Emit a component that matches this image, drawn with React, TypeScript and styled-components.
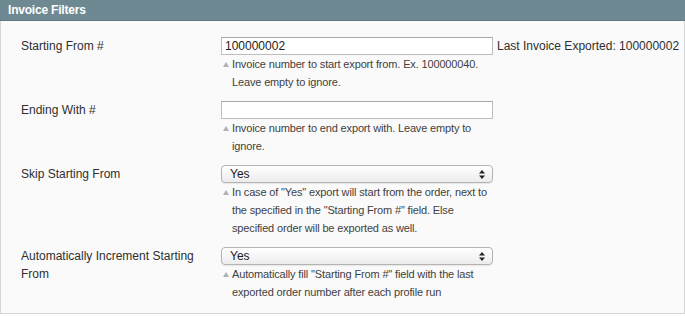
import React from "react";
import styled, { createGlobalStyle } from "styled-components";

const Global = createGlobalStyle`
  html, body { margin: 0; padding: 0; background: #ffffff; }
  body { font-family: "Liberation Sans", Arial, sans-serif; }
`;

const Panel = styled.section`
  width: 685px;
  box-sizing: border-box;
`;

const Header = styled.div`
  height: 21px;
  background: #6f8992;
  border-bottom: 1px solid #5f7780;
  box-sizing: border-box;
  padding: 0 8px;
  display: flex;
  align-items: center;
  color: #ffffff;
  font-weight: bold;
  font-size: 12px;
  letter-spacing: -0.2px;
`;

const Body = styled.div`
  background: #fafafa;
  border: 1px solid #d6d6d6;
  border-top: none;
  padding: 16px 0 13px 20px;
  display: flex;
  flex-direction: column;
  gap: 10px;
  height: 293px;
  box-sizing: border-box;
`;

const Row = styled.div`
  display: flex;
  align-items: flex-start;
`;

const Label = styled.div`
  width: 180px;
  margin-right: 20px;
  font-size: 12px;
  line-height: 18px;
  color: #2f2f2f;
`;

const Field = styled.div`
  width: 272px;
  display: flex;
  flex-direction: column;
`;

const TextInput = styled.input`
  width: 272px;
  height: 18px;
  box-sizing: border-box;
  border: 1px solid #bdbdbd;
  border-top-color: #a8a8a8;
  background: #ffffff;
  font-family: "Liberation Sans", Arial, sans-serif;
  font-size: 12px;
  color: #222;
  padding: 0 3px;
  margin: 0;
  outline: none;
`;

const SelectBox = styled.div`
  position: relative;
  width: 272px;
  height: 18px;
  box-sizing: border-box;
  border: 1px solid #b4b4b4;
  border-radius: 4px;
  background: linear-gradient(#ffffff, #ececec);
  box-shadow: 0 1px 1px rgba(0, 0, 0, 0.08);
  display: flex;
  align-items: center;
  padding: 0 8px;
  font-size: 12px;
  color: #1a1a1a;
`;

const Arrows = styled.svg`
  position: absolute;
  right: 7px;
  top: 4px;
`;

const Note = styled.div`
  position: relative;
  padding-left: 11px;
  font-size: 11px;
  line-height: 18px;
  letter-spacing: -0.15px;
  color: #3f3f3f;
`;

const Tri = styled.span`
  position: absolute;
  left: 2px;
  top: 7px;
  width: 0;
  height: 0;
  border-left: 3px solid transparent;
  border-right: 3px solid transparent;
  border-bottom: 5px solid #a9b3b8;
`;

const Side = styled.div`
  margin-left: 4px;
  font-size: 12px;
  line-height: 18px;
  color: #2f2f2f;
  white-space: nowrap;
`;

const Select = ({ value }: { value: string }) => (
  <SelectBox>
    {value}
    <Arrows width="6" height="9" viewBox="0 0 6 9">
      <path d="M3 0 L6 3.5 L0 3.5 Z" fill="#222" />
      <path d="M3 9 L6 5.5 L0 5.5 Z" fill="#222" />
    </Arrows>
  </SelectBox>
);

const Hint = ({ children }: { children: React.ReactNode }) => (
  <Note>
    <Tri />
    {children}
  </Note>
);

export default function App() {
  return (
    <>
      <Global />
      <Panel>
        <Header>Invoice Filters</Header>
        <Body>
          <Row>
            <Label>Starting From #</Label>
            <Field>
              <TextInput defaultValue="100000002" />
              <Hint>Invoice number to start export from. Ex. 100000040. Leave empty to ignore.</Hint>
            </Field>
            <Side>Last Invoice Exported: 100000002</Side>
          </Row>
          <Row>
            <Label>Ending With #</Label>
            <Field>
              <TextInput defaultValue="" />
              <Hint>Invoice number to end export with. Leave empty to ignore.</Hint>
            </Field>
          </Row>
          <Row>
            <Label>Skip Starting From</Label>
            <Field>
              <Select value="Yes" />
              <Hint>
                In case of "Yes" export will start from the order, next to the specified in the
                "Starting From #" field. Else specified order will be exported as well.
              </Hint>
            </Field>
          </Row>
          <Row>
            <Label>Automatically Increment Starting From</Label>
            <Field>
              <Select value="Yes" />
              <Hint>
                Automatically fill "Starting From #" field with the last exported order number
                after each profile run
              </Hint>
            </Field>
          </Row>
        </Body>
      </Panel>
    </>
  );
}
